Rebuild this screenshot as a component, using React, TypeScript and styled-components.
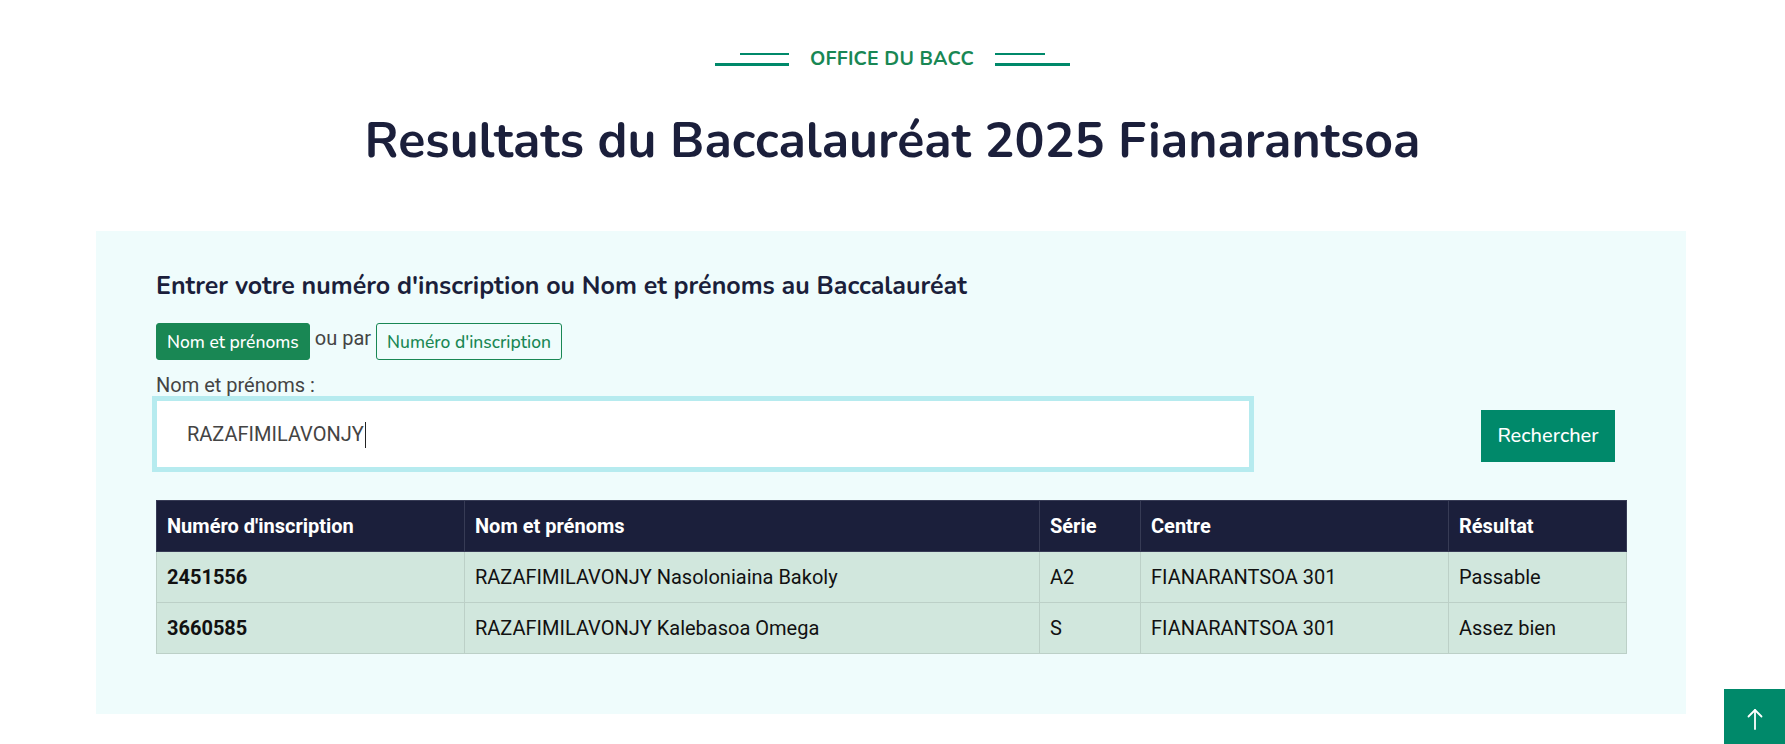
import React from "react";
import styled, { createGlobalStyle } from "styled-components";

const GlobalStyle = createGlobalStyle`
  html, body {
    margin: 0;
    padding: 0;
    background: #fff;
    font-family: Roboto, "Liberation Sans", sans-serif;
    color: #212529;
  }
  * { box-sizing: border-box; }
`;

const headFont = `"Nunito", "Open Sans", "Noto Sans", sans-serif`;

const results = [
  { num: "2451556", name: "RAZAFIMILAVONJY Nasoloniaina Bakoly", serie: "A2", centre: "FIANARANTSOA 301", mention: "Passable" },
  { num: "3660585", name: "RAZAFIMILAVONJY Kalebasoa Omega", serie: "S", centre: "FIANARANTSOA 301", mention: "Assez bien" },
];

export default function App() {
  return (
    <>
      <GlobalStyle />
      <Page>
        <Header>
          <Subtitle>
            <Lines side="left">
              <Line w={49} />
              <Line w={74} />
            </Lines>
            <span>OFFICE DU BACC</span>
            <Lines side="right">
              <Line w={50} />
              <Line w={75} />
            </Lines>
          </Subtitle>
          <Title>Resultats du Baccalauréat 2025 Fianarantsoa</Title>
        </Header>

        <Panel>
          <Heading>Entrer votre numéro d'inscription ou Nom et prénoms au Baccalauréat</Heading>
          <Switcher>
            <ModeButton active>Nom et prénoms</ModeButton>
            <span>ou par</span>
            <ModeButton>Numéro d'inscription</ModeButton>
          </Switcher>
          <Label htmlFor="nom">Nom et prénoms :</Label>
          <SearchRow>
            <InputWrap>
              <SearchInput id="nom" defaultValue="RAZAFIMILAVONJY" />
              <Caret />
            </InputWrap>
            <SearchButton>Rechercher</SearchButton>
          </SearchRow>

          <Table>
            <colgroup>
              <col style={{ width: 308 }} />
              <col style={{ width: 575 }} />
              <col style={{ width: 101 }} />
              <col style={{ width: 308 }} />
              <col style={{ width: 178 }} />
            </colgroup>
            <thead>
              <tr>
                <th>Numéro d'inscription</th>
                <th>Nom et prénoms</th>
                <th>Série</th>
                <th>Centre</th>
                <th>Résultat</th>
              </tr>
            </thead>
            <tbody>
              {results.map((r) => (
                <tr key={r.num}>
                  <td><b>{r.num}</b></td>
                  <td>{r.name}</td>
                  <td>{r.serie}</td>
                  <td>{r.centre}</td>
                  <td>{r.mention}</td>
                </tr>
              ))}
            </tbody>
          </Table>
        </Panel>
      </Page>

      <BackToTop aria-label="Retour en haut">
        <svg width="22" height="24" viewBox="0 0 22 24" fill="none" stroke="#fff" strokeWidth="1.8" strokeLinecap="round" strokeLinejoin="round">
          <path d="M11 22V3" />
          <path d="M4.5 9.5L11 3l6.5 6.5" />
        </svg>
      </BackToTop>
    </>
  );
}

const Page = styled.div`
  padding: 46px 0 40px;
`;

const Header = styled.header`
  display: flex;
  flex-direction: column;
  align-items: center;
`;

const Subtitle = styled.div`
  display: flex;
  align-items: center;
  gap: 21px;
  height: 24px;
  font-family: ${headFont};
  font-weight: 700;
  font-size: 19.5px;
  color: #198754;
  letter-spacing: 0.2px;
`;

const Lines = styled.div<{ side: "left" | "right" }>`
  display: flex;
  flex-direction: column;
  align-items: ${(p) => (p.side === "left" ? "flex-end" : "flex-start")};
  gap: 8px;
  padding-top: 2px;
`;

const Line = styled.div<{ w: number }>`
  width: ${(p) => p.w}px;
  height: 2.5px;
  background: #00896a;
`;

const Title = styled.h1`
  margin: 41px 0 0;
  font-family: ${headFont};
  font-weight: 700;
  font-size: 50px;
  line-height: 60px;
  color: #1b1f3b;
`;

const Panel = styled.section`
  margin: 60px 99px 0 96px;
  padding: 40px 60px 60px;
  background: #effcfc;
`;

const Heading = styled.h2`
  margin: 0 0 22px;
  font-family: ${headFont};
  font-weight: 700;
  font-size: 25px;
  line-height: 30px;
  color: #1b1f3b;
`;

const Switcher = styled.div`
  display: flex;
  align-items: flex-start;
  gap: 5px;
  font-size: 20px;
  color: #444;
  height: 37px;
  span { line-height: 30px; }
`;

const ModeButton = styled.button<{ active?: boolean }>`
  height: 37px;
  padding: 0 10px;
  border-radius: 3px;
  border: 1px solid #198754;
  background: ${(p) => (p.active ? "#198754" : "transparent")};
  color: ${(p) => (p.active ? "#fff" : "#198754")};
  font-family: ${headFont};
  font-weight: 500;
  font-size: 17.5px;
  cursor: pointer;
`;

const Label = styled.label`
  display: block;
  margin-top: 13px;
  font-size: 20px;
  line-height: 24px;
  color: #444;
`;

const SearchRow = styled.div`
  display: flex;
  align-items: center;
  justify-content: space-between;
  margin-top: 3px;
`;

const InputWrap = styled.div`
  position: relative;
  width: 1094px;
`;

const SearchInput = styled.input`
  display: block;
  width: 100%;
  height: 68px;
  padding: 0 30px;
  border: 1px solid #b6ebef;
  box-shadow: 0 0 0 4px #b6ebef;
  outline: none;
  background: #fff;
  font-family: Roboto, "Liberation Sans", sans-serif;
  font-size: 20px;
  color: #444;
`;

const Caret = styled.span`
  position: absolute;
  left: 209px;
  top: 22px;
  width: 1px;
  height: 26px;
  background: #222;
`;

const SearchButton = styled.button`
  width: 134px;
  height: 52px;
  margin: 3px 11px 0 0;
  border: 0;
  background: #00896a;
  color: #fff;
  font-family: ${headFont};
  font-weight: 500;
  font-size: 20px;
  cursor: pointer;
`;

const Table = styled.table`
  width: 100%;
  margin-top: 32px;
  border-collapse: collapse;
  table-layout: fixed;
  font-size: 20px;

  th, td {
    height: 51px;
    padding: 0 10px;
    text-align: left;
    vertical-align: middle;
  }
  th {
    background: #1b1f3b;
    color: #fff;
    font-weight: 700;
    border: 1px solid #373b55;
  }
  td {
    background: #d1e7dd;
    color: #111;
    border: 1px solid #bcd0c7;
  }
`;

const BackToTop = styled.button`
  position: fixed;
  right: 0;
  bottom: -5px;
  width: 61px;
  height: 60px;
  display: flex;
  align-items: center;
  justify-content: center;
  border: 0;
  background: #00896a;
  cursor: pointer;
`;
